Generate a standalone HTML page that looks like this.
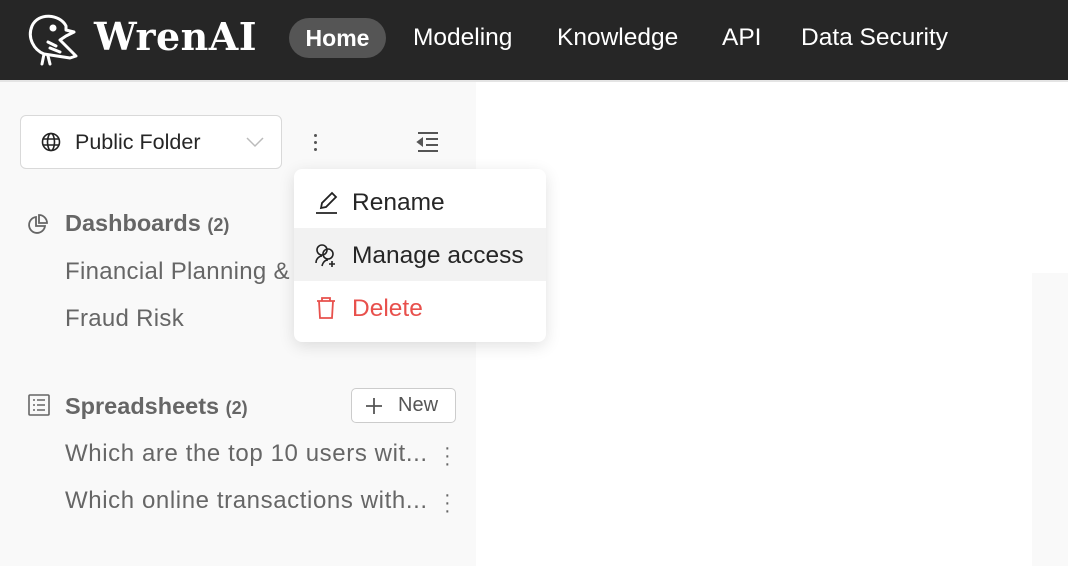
<!DOCTYPE html>
<html><head><meta charset="utf-8"><style>
*{margin:0;padding:0;box-sizing:border-box}
body{width:1068px;height:566px;overflow:hidden;font-family:"Liberation Sans",sans-serif;background:#fff;position:relative}
.hdr{position:absolute;left:0;top:0;width:1068px;height:82px;background:#262626;border-bottom:2px solid #e4e4e4}
.logo{position:absolute;left:94px;top:14px;color:#fff;font-family:"DejaVu Serif","Liberation Serif",serif;font-weight:bold;font-size:38px;letter-spacing:0.5px}
.nav{position:absolute;top:18px;height:40px;line-height:40px;color:#fff;font-size:24.5px}
.home{left:289px;width:97px;background:#555;border-radius:20px;text-align:center;font-weight:bold;font-size:23px}
.side{position:absolute;left:0;top:82px;width:476px;height:484px;background:#f9f9f9}
.sel{position:absolute;left:20px;top:115px;width:262px;height:54px;border:1.5px solid #d9d9d9;border-radius:6px;background:#fff}
.t{position:absolute;font-size:24px;color:#666;white-space:nowrap;letter-spacing:0.3px}
.menu{position:absolute;left:294px;top:169px;width:252px;height:173px;background:#fff;border-radius:8px;box-shadow:0 4px 16px rgba(0,0,0,.12)}
.mi{position:absolute;left:0;width:252px;height:53px;font-size:24.5px;color:#262626;line-height:55px;padding-left:58px}
.grey{position:absolute;left:1032px;top:273px;width:36px;height:293px;background:#f9f9f9}
</style></head><body>
<div class="hdr">
<svg style="position:absolute;left:26px;top:10px" width="58" height="58" viewBox="0 0 58 58" fill="none" stroke="#fff" stroke-width="3" stroke-linecap="round" stroke-linejoin="round">
<path d="M40 16 C34 4 12 2 6 16 C1 28 8 40 18 44 L44 48 L50 46 L34 30 L40 26 L48 22 L40 20 Z"/>
<circle cx="27" cy="18" r="2" fill="#fff"/><path d="M22 32 L30 36 M24 38 L34 42 M18 44 L16 54 M22 46 L24 54"/></svg>
<div class="logo">WrenAI</div>
<div class="nav home">Home</div>
<div class="nav" style="left:413px">Modeling</div>
<div class="nav" style="left:557px">Knowledge</div>
<div class="nav" style="left:722px">API</div>
<div class="nav" style="left:801px">Data Security</div>
</div>
<div class="side"></div>
<div class="grey"></div>
<div class="sel">
<svg style="position:absolute;left:20px;top:16px" width="20" height="20" viewBox="0 0 20 20" fill="none" stroke="#222" stroke-width="1.6"><circle cx="10" cy="10" r="8.5"/><ellipse cx="10" cy="10" rx="3.5" ry="8.5"/><path d="M2 7h16M2 13h16"/></svg>
<div class="t" style="left:54px;top:14px;color:#262626;font-size:21.5px;letter-spacing:0">Public Folder</div>
<svg style="position:absolute;left:224px;top:20px" width="20" height="12" viewBox="0 0 20 12" fill="none" stroke="#bbb" stroke-width="1.5"><path d="M2 2l8 8 8-8"/></svg>
</div>
<div style="position:absolute;left:314px;top:134px;width:4px">
<div style="width:3px;height:3px;background:#555;border-radius:2px;margin-bottom:4px"></div><div style="width:3px;height:3px;background:#555;border-radius:2px;margin-bottom:4px"></div><div style="width:3px;height:3px;background:#555;border-radius:2px"></div></div>
<svg style="position:absolute;left:416px;top:131px" width="24" height="22" viewBox="0 0 24 22" fill="none" stroke="#555" stroke-width="2"><path d="M2 2h20M10 8h12M10 14h12M2 20h20"/><path d="M6 8v6L2 11z" fill="#555"/></svg>
<svg style="position:absolute;left:27px;top:213px" width="22" height="22" viewBox="0 0 22 22" fill="none" stroke="#666" stroke-width="1.8"><path d="M9 4a8 8 0 1 0 9 9H9z"/><path d="M12 2v8h8a8 8 0 0 0-8-8z"/></svg>
<div class="t" style="left:65px;top:210px;font-weight:bold;font-size:23.5px;letter-spacing:0">Dashboards <span style="font-size:18px">(2)</span></div>
<div class="t" style="left:65px;top:258px">Financial Planning &amp;</div>
<div class="t" style="left:65px;top:305px">Fraud Risk</div>
<svg style="position:absolute;left:28px;top:394px" width="22" height="22" viewBox="0 0 22 22" fill="none" stroke="#666" stroke-width="1.6"><rect x="1" y="1" width="20" height="20" rx="1"/><path d="M5 6h2M9 6h8M5 11h2M9 11h8M5 16h2M9 16h8"/></svg>
<div class="t" style="left:65px;top:393px;font-weight:bold;font-size:23.5px;letter-spacing:0">Spreadsheets <span style="font-size:18px">(2)</span></div>
<div style="position:absolute;left:351px;top:388px;width:105px;height:35px;border:1.5px solid #ccc;border-radius:5px;background:#fff;font-size:20px;color:#555;line-height:33px;padding-left:46px">New
<svg style="position:absolute;left:13px;top:8px" width="18" height="18" viewBox="0 0 18 18" stroke="#555" stroke-width="1.8"><path d="M9 1v16M1 9h16"/></svg></div>
<div class="t" style="left:65px;top:440px;letter-spacing:0.6px">Which are the top 10 users wit...</div>
<div class="t" style="left:65px;top:487px;letter-spacing:0.6px">Which online transactions with...</div>
<div style="position:absolute;left:444px;top:444px;color:#666;font-size:20px;line-height:8px">·<br>·<br>·</div>
<div style="position:absolute;left:444px;top:491px;color:#666;font-size:20px;line-height:8px">·<br>·<br>·</div>
<div class="menu">
<div class="mi" style="top:6px">Rename
<svg style="position:absolute;left:21px;top:15px" width="24" height="24" viewBox="0 0 24 24" fill="none" stroke="#222" stroke-width="1.8"><path d="M6 18l1-5L17 3l4 4-10 10z"/><path d="M1 23h21"/></svg></div>
<div class="mi" style="top:59px;background:#f2f2f2">Manage access
<svg style="position:absolute;left:20px;top:15px" width="24" height="24" viewBox="0 0 24 24" fill="none" stroke="#222" stroke-width="1.6"><circle cx="8" cy="7" r="5"/><circle cx="14" cy="11" r="5"/><path d="M2 20c0-5 4-7 6-7M8 23c1-4 3-6 6-6M18 18v6M15 21h6"/></svg></div>
<div class="mi" style="top:112px;color:#e8504c">Delete
<svg style="position:absolute;left:22px;top:15px" width="20" height="24" viewBox="0 0 20 24" fill="none" stroke="#e8504c" stroke-width="1.8"><path d="M1 5h18M6 5V2h8v3M3 5l1 17h12l1-17"/></svg></div>
</div>
</body></html>
